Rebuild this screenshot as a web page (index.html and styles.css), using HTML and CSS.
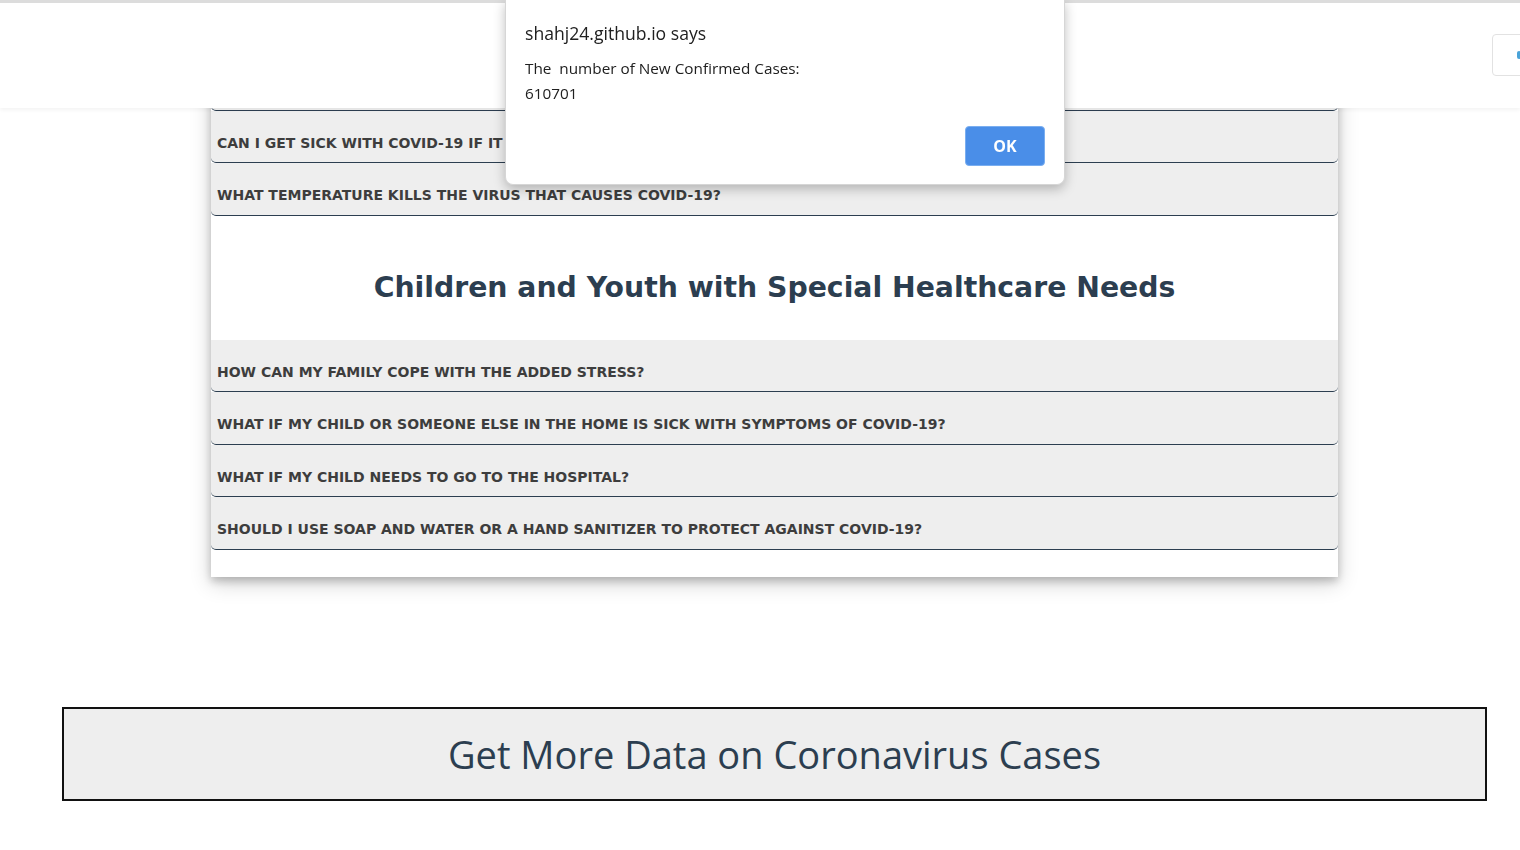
FILE: index.html
```html
<!DOCTYPE html>
<html lang="en">
<head>
<meta charset="utf-8">
<title>COVID-19 FAQ</title>
<link rel="stylesheet" href="styles.css">
</head>
<body>
<header class="topbar">
  <button class="nav-toggle" type="button" aria-label="Menu"><span class="dot"></span></button>
</header>

<main class="page">
  <section class="card">
    <div class="faq-row"><span class="q">How is COVID-19 spread?</span></div>
    <div class="faq-row"><span class="q">Can I get sick with COVID-19 if it is warm outside?</span></div>
    <div class="faq-row"><span class="q">What temperature kills the virus that causes COVID-19?</span></div>

    <h2 class="section-title">Children and Youth with Special Healthcare Needs</h2>

    <div class="faq-row"><span class="q">How can my family cope with the added stress?</span></div>
    <div class="faq-row"><span class="q">What if my child or someone else in the home is sick with symptoms of COVID-19?</span></div>
    <div class="faq-row"><span class="q">What if my child needs to go to the hospital?</span></div>
    <div class="faq-row"><span class="q">Should I use soap and water or a hand sanitizer to protect against COVID-19?</span></div>
  </section>

  <a class="data-btn" href="#">Get More Data on Coronavirus Cases</a>
</main>

<div class="dialog" role="alertdialog">
  <div class="dialog-title">shahj24.github.io says</div>
  <div class="dialog-msg">The&nbsp; number of New Confirmed Cases:</div>
  <div class="dialog-msg">610701</div>
  <div class="dialog-actions">
    <button class="ok-btn" type="button">OK</button>
  </div>
</div>
</body>
</html>
```

FILE: styles.css
```css
html, body {
  margin: 0;
  padding: 0;
  background: #ffffff;
  overflow: hidden;
  height: 850px;
}

body {
  font-family: "Open Sans", "Liberation Sans", sans-serif;
  color: #2c3e50;
}

.topbar {
  position: fixed;
  top: 0;
  left: 0;
  right: 0;
  height: 105px;
  border-top: 3px solid #dcdcdc;
  background: #ffffff;
  box-shadow: 0 2px 4px rgba(0, 0, 0, 0.05);
  display: flex;
  align-items: center;
  justify-content: flex-end;
  overflow: hidden;
  z-index: 5;
}

.nav-toggle {
  width: 60px;
  height: 42px;
  margin-right: -32px;
  margin-top: -2px;
  border: 1px solid #e2e2e2;
  border-radius: 4px;
  background: #ffffff;
  padding: 0 0 0 24px;
  display: flex;
  align-items: center;
}

.nav-toggle .dot {
  width: 4px;
  height: 8px;
  border-radius: 2px;
  background: #4aa3d8;
}

.page {
  padding-top: 58px;
}

.card {
  margin-left: 211px;
  width: 1127px;
  background: #ffffff;
  box-shadow: 0 4px 8px 0 rgba(0, 0, 0, 0.2), 0 6px 20px 0 rgba(0, 0, 0, 0.19);
  padding-bottom: 27px;
}

.faq-row {
  box-sizing: border-box;
  height: 52.5px;
  background: #eeeeee;
  border-bottom: 1px solid #2c3e50;
  border-radius: 0 0 5px 5px;
  padding: 23px 6px 0 6px;
}

.q {
  display: block;
  font-family: "DejaVu Sans", sans-serif;
  font-weight: 700;
  font-size: 14px;
  line-height: 19px;
  text-transform: uppercase;
  color: #3d3d3d;
  white-space: nowrap;
}

.section-title {
  margin: 0;
  padding: 51px 0 32px;
  text-align: center;
  font-family: "DejaVu Sans", sans-serif;
  font-weight: 700;
  font-size: 28.3px;
  line-height: 41px;
  color: #2c3e50;
}

.data-btn {
  display: block;
  box-sizing: border-box;
  margin: 130px 0 0 62px;
  width: 1425px;
  height: 94px;
  border: 2px solid #111111;
  background: #eeeeee;
  text-align: center;
  font-family: "Open Sans", sans-serif;
  font-size: 38px;
  line-height: 90px;
  color: #2c3e50;
  text-decoration: none;
}

.dialog {
  position: fixed;
  top: 0;
  left: 505px;
  width: 560px;
  height: 185px;
  box-sizing: border-box;
  background: #ffffff;
  border: 1px solid #d6d6d6;
  border-top: none;
  border-radius: 0 0 8px 8px;
  box-shadow: 0 4px 12px rgba(0, 0, 0, 0.25);
  padding: 20px 19px 0 19px;
  font-family: "Open Sans", "Noto Sans", sans-serif;
  color: #202020;
  z-index: 10;
}

.dialog-title {
  font-size: 17.6px;
  line-height: 26px;
  margin-bottom: 10px;
}

.dialog-msg {
  font-size: 15.3px;
  line-height: 25px;
}

.dialog-actions {
  display: flex;
  justify-content: flex-end;
  margin-top: 20px;
}

.ok-btn {
  width: 80px;
  height: 40px;
  border: 1px solid #7aaef0;
  border-radius: 4px;
  background: #4a8ee8;
  color: #ffffff;
  font-family: "Open Sans", sans-serif;
  font-weight: 700;
  font-size: 16px;
}
```
